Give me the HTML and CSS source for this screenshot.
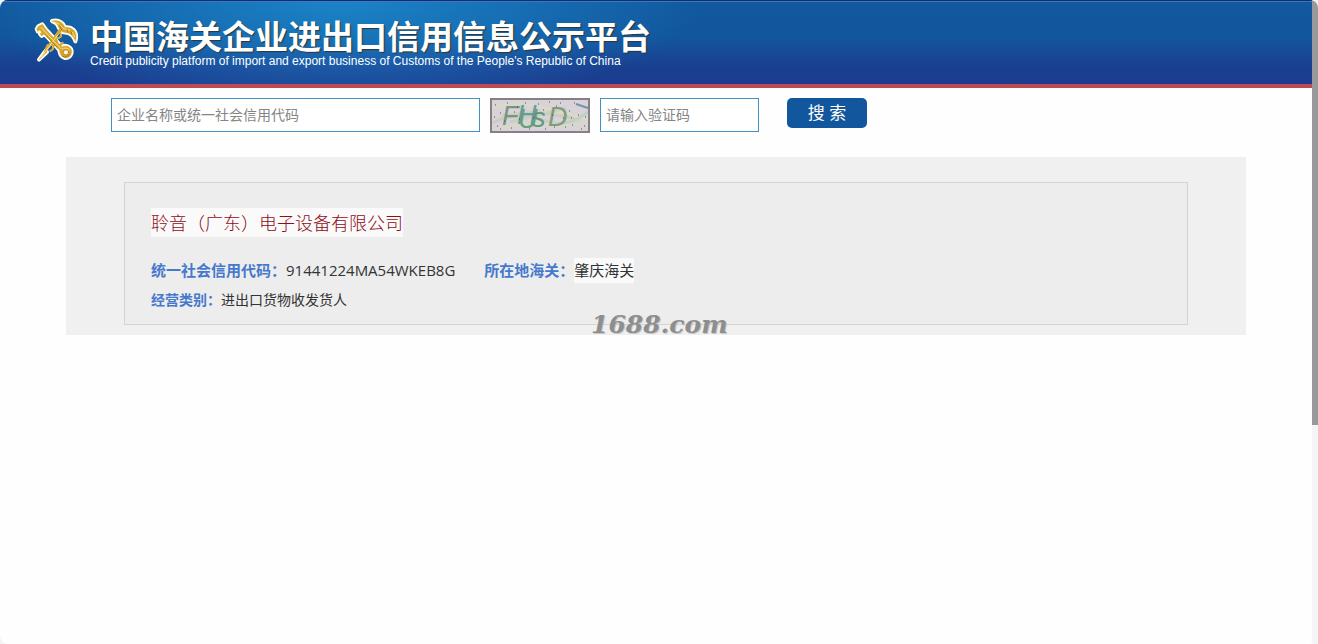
FILE: index.html
```html
<!DOCTYPE html>
<html lang="zh-CN">
<head>
<meta charset="UTF-8">
<meta name="viewport" content="width=device-width, initial-scale=1.0">
<title>中国海关企业进出口信用信息公示平台</title>
<link rel="stylesheet" href="styles.css">
</head>
<body>
<div class="page">
  <header class="header">
    <svg class="logo" viewBox="0 0 195 180" aria-hidden="true">
      <defs>
        <g id="emblem">
          <!-- staff and wings -->
          <path d="M42 149L62 122L66 126Z"/>
          <path d="M61 124L108 56" stroke-width="8"/>
          <path d="M81 33Q100 28 114 42L120 52Q136 50 146 60Q158 72 151 94Q146 76 130 69L112 66L101 53Q98 39 81 33Z"/>
          <path d="M64 119Q63 100 80 105Q101 111 96 93Q84 80 98 72Q107 69 108 57M76 123Q91 116 81 101Q76 88 93 84Q112 86 107 70" fill="none" stroke-width="5"/>
          <!-- key -->
          <path d="M40 49L52 43L62 57L101 100L113 113L104 121L92 108L58 72L50 78L45 72L50 67L44 60L38 64L35 57Z"/>
          <path d="M98 112L112 99" stroke-width="7"/>
          <path d="M108 113Q116 105 128 109Q142 115 140 128Q136 145 120 144Q106 140 104 126Q102 119 108 113Z"/>
        </g>
      </defs>
      <use href="#emblem" class="emblem-edge"/>
      <use href="#emblem" class="emblem-gold"/>
      <circle cx="123" cy="127" r="8" class="emblem-hole"/>
      <path class="emblem-shine" d="M48 52L108 116M88 36Q106 40 114 55L136 61Q146 68 149 80M50 139L98 75M111 118Q121 109 133 119"/>
      <path class="emblem-shade" d="M60 74L96 111M104 45L110 60M126 57L128 67M138 62L140 73M112 139Q127 145 135 132"/>
    </svg>
    <div class="brand">
      <h1>中国海关企业进出口信用信息公示平台</h1>
      <p>Credit publicity platform of import and export business of Customs of the People's Republic of China</p>
    </div>
  </header>

  <form class="search">
    <input class="field keyword" type="text" aria-label="企业名称或统一社会信用代码" placeholder="企业名称或统一社会信用代码">
    <svg class="captcha" viewBox="0 0 100 35" role="img" aria-label="验证码">
      <rect width="100" height="35" fill="#d9d2d9"/>
      <g fill="none" stroke-width="3" opacity=".7">
        <path d="M2 9Q30 2 60 11T98 21" stroke="#d9dfc0"/>
        <path d="M2 25Q28 12 52 22T98 14" stroke="#b9cfbd"/>
        <path d="M8 31Q40 22 70 28L98 25" stroke="#d5dcc0"/>
        <path d="M12 18L45 14L84 20M20 24L76 10" stroke="#c5cdb5"/>
      </g>
      <path d="M86 6L98 10" stroke="#7395a8" stroke-width="2"/>
      <g class="captcha-text">
        <text x="12" y="27" fill="#78967f">F</text>
        <text x="27" y="26" fill="#699ba1">H</text>
        <text x="28" y="30" fill="#68a07f">U</text>
        <text x="42" y="29" fill="#62967d">s</text>
        <text x="58" y="28" fill="#7f9b7e">D</text>
      </g>
      <path class="noise" d="M5 7h1M10 15h1M7 28h1M17 5h1M21 30h1M27 9h1M35 5h1M39 31h1M48 6h1M55 31h1M59 4h1M64 29h1M70 5h1M75 29h1M79 13h1M82 27h1M84 5h1M91 31h1M95 19h1M88 17h1M73 20h1M62 17h1M53 12h1M43 20h1M29 21h1M14 23h1M4 19h1M94 28h1M66 8h1M10 31h1M81 20h1M24 14h1"/>
      <rect x="1" y="1" width="98" height="33" fill="none" stroke="#858084" stroke-width="2"/>
    </svg>
    <input class="field code" type="text" aria-label="请输入验证码" placeholder="请输入验证码">
    <button type="button">搜 索</button>
  </form>

  <main class="results">
    <section class="company">
      <h2><span class="highlight">聆音（广东）电子设备有限公司</span></h2>
      <dl class="row">
        <div><dt>统一社会信用代码：</dt><dd>91441224MA54WKEB8G</dd></div>
        <div><dt>所在地海关：</dt><dd class="highlight">肇庆海关</dd></div>
      </dl>
      <dl class="row small">
        <div><dt>经营类别：</dt><dd>进出口货物收发货人</dd></div>
      </dl>
    </section>
    <span class="watermark">1688.com</span>
  </main>
</div>
<div class="scrollbar"><div class="thumb"></div></div>
</body>
</html>
```
FILE: styles.css
```css
* {
  box-sizing: border-box;
}
html {
  background: #f0f2f4;
}
body {
  margin: 0;
  min-height: 100vh;
  display: flex;
  font-family: "Open Sans", "Noto Sans CJK SC", sans-serif;
  font-size: 15px;
  color: #333;
  background-color: #fefefe;
  border-radius: 8px;
  overflow: hidden;
}
h1, h2, p, dl, dd {
  margin: 0;
}
.page {
  flex: 1;
  min-width: 0;
}

/* header */
.header {
  display: flex;
  height: 88px;
  padding: 10px 0 0 25px;
  border-bottom: 4px solid #bf4b52;
  background:
    radial-gradient(ellipse 360px 110px at 340px 0, rgba(29, 139, 207, 0.85), rgba(29, 139, 207, 0)),
    linear-gradient(#12599f 0, #12569d 45%, #1b3f90 80%, #1b3d8f);
  box-shadow: inset 0 1px #092f7b, inset 0 2px #4278b4;
}
.logo {
  width: 65px;
  height: 60px;
  stroke-linecap: round;
  stroke-linejoin: round;
}
.emblem-edge {
  fill: #fffdf0;
  stroke: #fffdf0;
  stroke-width: 12px;
}
.emblem-gold {
  fill: #d5a52f;
  stroke: #d5a52f;
  stroke-width: 1px;
}
.emblem-hole {
  fill: #fff6cb;
  stroke: #9b681b;
  stroke-width: 2px;
}
.emblem-shine {
  fill: none;
  stroke: #ffe784;
  stroke-width: 3px;
}
.emblem-shade {
  fill: none;
  stroke: #94641a;
  stroke-width: 2px;
}
.brand {
  color: #fff;
  white-space: nowrap;
}
.brand h1 {
  margin-top: 6px;
  font-family: "Noto Sans CJK SC", sans-serif;
  font-size: 33px;
  line-height: 38px;
  font-weight: bold;
  text-shadow: 1px 1px 1px #333;
}
.brand p {
  font-family: "Liberation Sans", Arial, sans-serif;
  font-size: 12px;
  line-height: 14px;
}

/* search form */
.search {
  display: flex;
  align-items: flex-start;
  gap: 10px;
  padding: 10px 0 0 111px;
}
.field {
  height: 34px;
  padding: 0 5px 2px;
  border: 1px solid #4390c1;
  background-color: #fff;
  font-family: inherit;
  font-size: 14px;
}
.field::placeholder {
  color: #858585;
}
.keyword {
  width: 369px;
}
.code {
  width: 159px;
}
.captcha {
  width: 100px;
  height: 35px;
}
.captcha-text {
  font-family: "Liberation Sans", Arial, sans-serif;
  font-size: 27px;
  font-style: italic;
}
.noise {
  stroke: #514b5c;
  stroke-width: 1px;
}
.search button {
  width: 80px;
  height: 30px;
  margin-left: 18px;
  padding: 0;
  border: none;
  border-radius: 5px;
  background-color: #12569d;
  color: #fff;
  font-family: inherit;
  font-size: 17px;
  line-height: 30px;
  cursor: pointer;
}

/* results */
.results {
  position: relative;
  max-width: 1180px;
  margin: 24px auto 0;
  padding: 25px 58px 10px;
  background-color: #f0f0f0;
}
.company {
  padding: 25px 26px 10px;
  border: 1px solid #d4d4d4;
  background-color: #ededed;
}
.company h2 {
  display: flex;
  margin-bottom: 19px;
  color: #8f0d17;
  font-family: "Noto Sans CJK SC", sans-serif;
  font-size: 18px;
  line-height: 29px;
  font-weight: 300;
}
.highlight {
  background-color: #fafafa;
}
.row {
  display: flex;
  gap: 29px;
  line-height: 25px;
  padding: 2px 0;
}
.row div {
  display: flex;
}
.row dt {
  color: #4678cc;
  font-weight: bold;
}
.row.small {
  font-size: 14px;
}
.watermark {
  position: absolute;
  left: 525px;
  bottom: -4px;
  color: #8e8e8e;
  font-family: "DejaVu Serif", serif;
  font-size: 25px;
  line-height: 28px;
  font-style: italic;
  font-weight: bold;
  text-shadow: 1px 1px #c8c8c8;
}

/* scrollbar */
.scrollbar {
  width: 6px;
  background-color: #f5f5f5;
}
.thumb {
  height: 66vh;
  background-color: #999;
}
```
